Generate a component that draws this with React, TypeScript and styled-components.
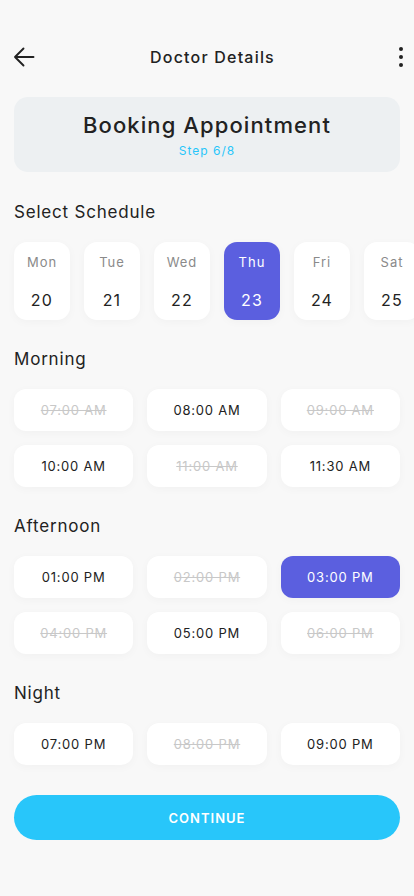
import React from "react";
import styled, { createGlobalStyle } from "styled-components";

const GlobalStyle = createGlobalStyle`
    html, body {
        margin: 0;
        padding: 0;
        background: #f8f8f8;
    }
    body {
        font-family: Inter, Roboto, "Noto Sans", sans-serif;
        color: #222;
    }
    * {
        box-sizing: border-box;
    }
`;

const PRIMARY = "#5b5fdf";
const ACCENT = "#28c6fa";

const Page = styled.div`
    width: 414px;
    min-height: 896px;
    padding: 40px 14px 30px;
    overflow: hidden;
`;

const Header = styled.header`
    height: 34px;
    display: flex;
    align-items: center;
    justify-content: space-between;
`;

const IconButton = styled.button`
    width: 24px;
    height: 34px;
    display: flex;
    align-items: center;
    justify-content: center;
    padding: 0;
    border: none;
    background: transparent;
    color: #222;
`;

const Title = styled.h1`
    margin: 0;
    font-size: 16px;
    font-weight: 500;
    letter-spacing: 1.2px;
    color: #222;
`;

const Banner = styled.div`
    margin-top: 23px;
    height: 75px;
    border-radius: 14px;
    background: #edf0f2;
    display: flex;
    flex-direction: column;
    align-items: center;
    justify-content: center;
    gap: 4px;
`;

const BannerTitle = styled.div`
    font-size: 22px;
    font-weight: 500;
    letter-spacing: 1.1px;
    color: #222;
    line-height: 28px;
`;

const BannerStep = styled.div`
    font-size: 12px;
    letter-spacing: 1px;
    color: ${ACCENT};
    line-height: 16px;
`;

const Section = styled.section<{ $top: number }>`
    margin-top: ${(p) => p.$top}px;
`;

const SectionTitle = styled.h2`
    margin: 0 0 18px;
    font-size: 17px;
    font-weight: 400;
    letter-spacing: 0.8px;
    line-height: 24px;
    color: #222;
`;

const DayRow = styled.div`
    display: flex;
    gap: 14px;
`;

const DayCard = styled.div<{ $active?: boolean }>`
    flex: 0 0 56px;
    height: 78px;
    border-radius: 13px;
    background: ${(p) => (p.$active ? PRIMARY : "#fff")};
    box-shadow: 0 2px 10px rgba(0, 0, 0, 0.03);
    display: flex;
    flex-direction: column;
    align-items: center;
    padding-top: 12px;
`;

const DayName = styled.div<{ $active?: boolean }>`
    font-size: 13px;
    letter-spacing: 1px;
    line-height: 16px;
    color: ${(p) => (p.$active ? "#fff" : "#8a8a8a")};
`;

const DayNum = styled.div<{ $active?: boolean }>`
    margin-top: 19px;
    font-size: 16px;
    letter-spacing: 1.2px;
    line-height: 22px;
    color: ${(p) => (p.$active ? "#fff" : "#222")};
`;

const SlotGrid = styled.div`
    display: grid;
    grid-template-columns: repeat(3, 1fr);
    gap: 14px;
`;

const Slot = styled.div<{ $active?: boolean; $disabled?: boolean }>`
    height: 42px;
    border-radius: 12px;
    background: ${(p) => (p.$active ? PRIMARY : "#fff")};
    box-shadow: 0 2px 10px rgba(0, 0, 0, 0.03);
    display: flex;
    align-items: center;
    justify-content: center;
    font-size: 13px;
    letter-spacing: 0.8px;
    color: ${(p) => (p.$active ? "#fff" : p.$disabled ? "#c8c8c8" : "#222")};
    text-decoration: ${(p) => (p.$disabled ? "line-through" : "none")};
`;

const ContinueButton = styled.button`
    margin-top: 30px;
    width: 100%;
    height: 45px;
    border: none;
    border-radius: 23px;
    background: ${ACCENT};
    color: #fff;
    font-family: inherit;
    font-size: 13px;
    font-weight: 600;
    letter-spacing: 1px;
`;

type SlotItem = { time: string; disabled?: boolean; active?: boolean };

const days = [
    { name: "Mon", num: 20 },
    { name: "Tue", num: 21 },
    { name: "Wed", num: 22 },
    { name: "Thu", num: 23, active: true },
    { name: "Fri", num: 24 },
    { name: "Sat", num: 25 },
];

const sections: { title: string; slots: SlotItem[] }[] = [
    {
        title: "Morning",
        slots: [
            { time: "07:00 AM", disabled: true },
            { time: "08:00 AM" },
            { time: "09:00 AM", disabled: true },
            { time: "10:00 AM" },
            { time: "11:00 AM", disabled: true },
            { time: "11:30 AM" },
        ],
    },
    {
        title: "Afternoon",
        slots: [
            { time: "01:00 PM" },
            { time: "02:00 PM", disabled: true },
            { time: "03:00 PM", active: true },
            { time: "04:00 PM", disabled: true },
            { time: "05:00 PM" },
            { time: "06:00 PM", disabled: true },
        ],
    },
    {
        title: "Night",
        slots: [
            { time: "07:00 PM" },
            { time: "08:00 PM", disabled: true },
            { time: "09:00 PM" },
        ],
    },
];

const App = () => (
    <>
        <GlobalStyle />
        <Page>
            <Header>
                <IconButton aria-label="Back" style={{ marginLeft: -2 }}>
                    <svg width="22" height="22" viewBox="0 0 22 22" fill="none">
                        <path
                            d="M20.5 11H2M10.5 2.5 2 11l8.5 8.5"
                            stroke="#222"
                            strokeWidth="1.9"
                            strokeLinecap="round"
                            strokeLinejoin="round"
                        />
                    </svg>
                </IconButton>
                <Title>Doctor Details</Title>
                <IconButton aria-label="More" style={{ marginRight: -13 }}>
                    <svg width="6" height="22" viewBox="0 0 6 22">
                        <circle cx="3" cy="3" r="2" fill="#222" />
                        <circle cx="3" cy="11" r="2" fill="#222" />
                        <circle cx="3" cy="19" r="2" fill="#222" />
                    </svg>
                </IconButton>
            </Header>

            <Banner>
                <BannerTitle>Booking Appointment</BannerTitle>
                <BannerStep>Step 6/8</BannerStep>
            </Banner>

            <Section $top={28}>
                <SectionTitle>Select Schedule</SectionTitle>
                <DayRow>
                    {days.map((d) => (
                        <DayCard key={d.name} $active={d.active}>
                            <DayName $active={d.active}>{d.name}</DayName>
                            <DayNum $active={d.active}>{d.num}</DayNum>
                        </DayCard>
                    ))}
                </DayRow>
            </Section>

            {sections.map((s) => (
                <Section key={s.title} $top={27}>
                    <SectionTitle>{s.title}</SectionTitle>
                    <SlotGrid>
                        {s.slots.map((slot) => (
                            <Slot
                                key={slot.time}
                                $active={slot.active}
                                $disabled={slot.disabled}
                            >
                                {slot.time}
                            </Slot>
                        ))}
                    </SlotGrid>
                </Section>
            ))}

            <ContinueButton>CONTINUE</ContinueButton>
        </Page>
    </>
);

export default App;
